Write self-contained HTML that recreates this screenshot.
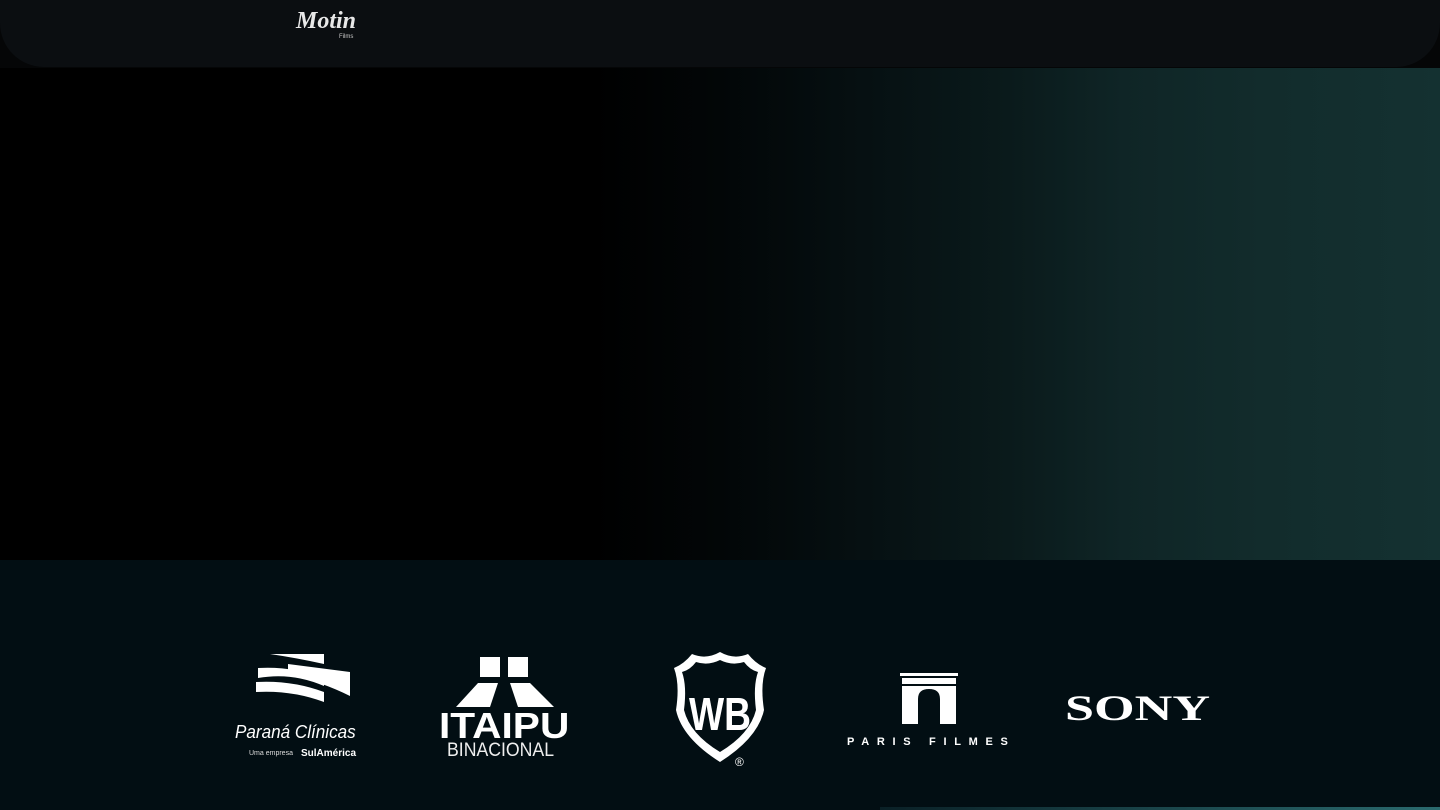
<!DOCTYPE html>
<html><head><style>
*{margin:0;padding:0;box-sizing:border-box}
body{width:1440px;height:810px;overflow:hidden;background:#050607;font-family:"Liberation Sans",sans-serif;position:relative}
.hdr{position:absolute;left:0;top:0;width:1440px;height:67px;background:#0b0e11;border-radius:0 0 44px 44px}
.hero{position:absolute;left:0;top:68px;width:1440px;height:492px;background:linear-gradient(90deg,#000 0%,#000 41%,#020607 50%,#061012 60%,#0a1a1b 70%,#0f2526 78%,#122c2c 88%,#143131 100%)}
.foot{position:absolute;left:0;top:560px;width:1440px;height:250px;background:#020e13}
.line{position:absolute;left:880px;top:807px;width:560px;height:3px;background:linear-gradient(90deg,#0a2026,#2a6a6e)}
.w{color:#fff;position:absolute;white-space:nowrap}
</style></head><body>
<div class="hdr">
 <div class="w" style="left:296px;top:8px;font-family:'Liberation Serif',serif;font-style:italic;font-size:24px;font-weight:bold;color:#e8e8e8">Motin</div>
 <div class="w" style="left:339px;top:34px;font-size:6px;color:#ccc">Films</div>
</div>
<div class="hero"></div>
<div class="foot">
 <svg class="w" style="left:252px;top:92px" width="102" height="56" viewBox="0 0 102 56">
  <path d="M18 2 L72 2 L72 12 Q45 6 18 2Z" fill="#fff"/>
  <path d="M6 16 Q40 14 72 26 L72 34 Q40 20 6 26Z" fill="#fff"/>
  <path d="M36 12 L98 20 L98 44 Q70 30 36 22Z" fill="#fff"/>
  <path d="M4 30 Q40 28 72 40 L72 50 Q40 38 4 40Z" fill="#fff"/>
 </svg>
 <div class="w" style="left:235px;top:162px;font-size:18px;transform:scaleX(0.95);transform-origin:left;font-style:italic">Paraná Clínicas</div>
 <div class="w" style="left:249px;top:190px;font-size:7px;color:#ddd">Uma empresa</div>
 <div class="w" style="left:301px;top:188px;font-size:10px;font-weight:bold">SulAmérica</div>
 <svg class="w" style="left:454px;top:97px" width="102" height="52" viewBox="0 0 102 52">
  <rect x="26" y="0" width="20" height="20" fill="#fff"/><rect x="54" y="0" width="20" height="20" fill="#fff"/>
  <path d="M24 26 L44 26 L36 50 L2 50Z M56 26 L76 26 L100 50 L64 50Z" fill="#fff"/>
 </svg>
 <div class="w" style="left:439px;top:145px;font-size:36px;font-weight:bold;transform:scaleX(1.13);transform-origin:left">ITAIPU</div>
 <div class="w" style="left:447px;top:180px;font-size:19px;color:#eee;transform:scaleX(0.93);transform-origin:left">BINACIONAL</div>
 <svg class="w" style="left:672px;top:90px" width="96" height="116" viewBox="0 0 96 116">
  <path d="M48 2 Q62 10 76 4 Q84 14 94 18 Q88 34 92 60 Q86 88 48 112 Q10 88 4 60 Q8 34 2 18 Q12 14 20 4 Q34 10 48 2Z" fill="#fff"/>
  <path d="M48 10 Q60 16 72 12 Q78 20 86 22 Q81 36 84 60 Q78 84 48 102 Q18 84 12 60 Q15 36 10 22 Q18 20 24 12 Q36 16 48 10Z" fill="#020e13"/>
  <text x="48" y="80" text-anchor="middle" font-family="Liberation Sans" font-weight="bold" font-size="46" fill="#fff" textLength="62" lengthAdjust="spacingAndGlyphs">WB</text>
  <text x="63" y="116" font-size="12" fill="#fff">®</text>
 </svg>
 <svg class="w" style="left:900px;top:113px" width="58" height="52" viewBox="0 0 58 52">
  <rect x="0" y="0" width="58" height="3" fill="#fff"/><rect x="2" y="5" width="54" height="6" fill="#fff"/>
  <path d="M2 13 H56 V51 H40 V26 Q40 16 29 16 Q18 16 18 26 V51 H2Z" fill="#fff"/>
 </svg>
 <div class="w" style="left:847px;top:176px;font-size:11px;font-weight:bold;letter-spacing:7.7px">PARIS FILMES</div>
 <div class="w" style="left:1065px;top:127px;font-family:'Liberation Serif',serif;font-weight:bold;font-size:36px;transform:scaleX(1.45);transform-origin:left">SONY</div>
</div>
<div class="line"></div>
</body></html>
